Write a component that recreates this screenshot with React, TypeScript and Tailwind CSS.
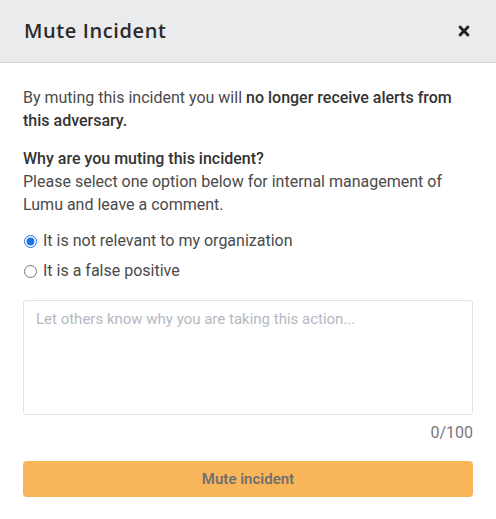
import { FaTimes } from 'react-icons/fa';

export default function App() {
  return (
    <div className="w-[496px] h-[519px] bg-white font-['Roboto',sans-serif] text-[#3a3a3a]">
      {/* Header */}
      <div className="h-[63px] bg-[#eaebed] border-b border-[#cfd1d4] flex items-center justify-between pl-6 pr-6">
        <h2 className="text-[20px] font-['Open_Sans',sans-serif] font-semibold text-[#2b2b2b] tracking-[0.6px]">Mute Incident</h2>
        <button className="text-[#222] mr-[1px]">
          <FaTimes className="w-[14px] h-[16px]" />
        </button>
      </div>

      {/* Body */}
      <div className="px-[23px] pt-[23px]">
        <p className="text-[16px] leading-[23px] text-[#4a4a4a]">
          By muting this incident you will <span className="font-medium text-[#333]">no longer receive alerts from this adversary.</span>
        </p>
        <div className="mt-[15px] text-[16px] leading-[23px] text-[#4a4a4a]">
          <p className="font-medium text-[#333]">Why are you muting this incident?</p>
          <p>Please select one option below for internal management of Lumu and leave a comment.</p>
        </div>

        <div className="mt-[15px] flex flex-col gap-[10px]">
          <label className="flex items-center gap-[6px] pl-[1px] text-[16px] leading-[20px] text-[#4a4a4a]">
            <input type="radio" name="reason" defaultChecked className="w-[13px] h-[13px] m-0 accent-[#1a73e8]" />
            It is not relevant to my organization
          </label>
          <label className="flex items-center gap-[6px] pl-[1px] text-[16px] leading-[20px] text-[#4a4a4a]">
            <input type="radio" name="reason" className="w-[13px] h-[13px] m-0" />
            It is a false positive
          </label>
        </div>

        <textarea
          placeholder="Let others know why you are taking this action..."
          className="mt-[19px] block w-full h-[115px] resize-none rounded-[3px] border border-[#e1e2e5] px-3 py-[8px] text-[15px] leading-[20px] outline-none placeholder:text-[#b5b8c0]"
        />
        <div className="mt-[8px] text-right text-[16px] leading-[20px] text-[#777]">0/100</div>

        <button className="mt-[18px] w-full h-[36px] rounded-[4px] bg-[#f9b55a] text-[15px] font-semibold text-[#707070]">
          Mute incident
        </button>
      </div>
    </div>
  );
}
